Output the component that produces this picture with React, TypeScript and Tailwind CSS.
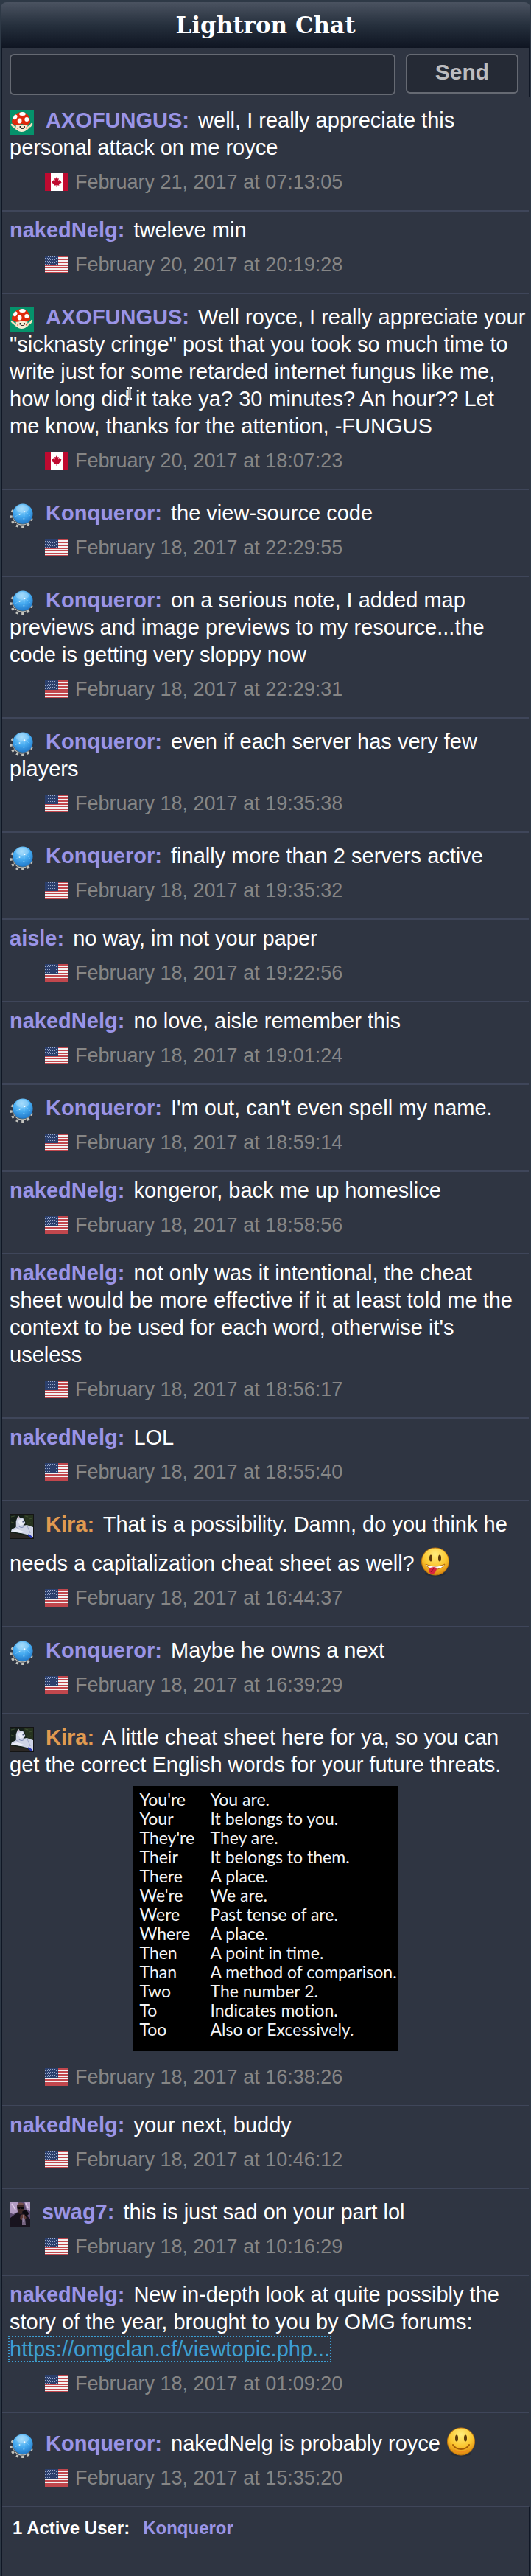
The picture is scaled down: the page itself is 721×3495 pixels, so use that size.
import React from 'react';

type Country = 'us' | 'ca';
type AvatarName = 'mushroom' | 'konqueror' | 'cat' | 'swag';

interface ChatMessage {
    name: string;
    date: string;
    body: React.ReactNode;
    avatar?: AvatarName;
    country?: Country;
    staff?: boolean;
    attachment?: React.ReactNode;
}

const UsFlag = () => (
    <svg viewBox="0 0 32 24" className="h-6 w-8 shrink-0" role="img" aria-label="United States">
        <rect width="32" height="24" fill="#f4f2f2" />
        {[0, 4, 8, 12, 15, 19, 22].map((y) => (
            <rect key={y} y={y} width="32" height="2" fill="#c1474d" />
        ))}
        <rect width="18" height="13" fill="#2b3f6c" />
        {[1, 3, 5, 7, 9, 11].map((y, row) =>
            [1, 4, 7, 10, 13, 16].map((x) => (
                <rect key={`${x}-${y}`} x={x + (row % 2 ? -1 : 0)} y={y} width="1" height="1" fill="#9aa9c9" />
            ))
        )}
    </svg>
);

const CaFlag = () => (
    <svg viewBox="0 0 32 24" className="h-6 w-8 shrink-0" role="img" aria-label="Canada">
        <rect width="32" height="24" fill="#fff" />
        <rect width="8" height="24" fill="#bf0a30" />
        <rect x="24" width="8" height="24" fill="#bf0a30" />
        <path
            d="M16 5l1.400 2.600 1.400-.6-.6 3.600 1.800-1.600.5 1.100 1.900-.2-.6 1.900.9.7-3.600 2.800.4 1.400-3.300-.5V19h-.6v-2.800l-3.300.5.4-1.400-3.600-2.800.9-.7-.6-1.900 1.900.2.5-1.100 1.800 1.600-.6-3.600 1.400.6z"
            fill="#bf0a30"
        />
    </svg>
);

const MushroomAvatar = () => (
    <svg viewBox="0 0 34 34" preserveAspectRatio="none" className="h-full w-full">
        <rect width="34" height="34" fill="#05926b" />
        <path d="M5 22l-2-2M29 22l2-3M5 22l5 4M28 22l-4 4" stroke="#f4dfc0" strokeWidth="2.500" strokeLinecap="round" />
        <path d="M9 20c-1 6 2 10 8 10s9-4 8-10z" fill="#f7ead2" />
        <path d="M3 17C4 8 10 3 17 3c7 0 12 6 12 14-3 5-7 3-12 2-5 2-11 3-14-2z" fill="#e02a0c" />
        <ellipse cx="18" cy="5.500" rx="4.500" ry="2.500" fill="#fff" />
        <ellipse cx="8" cy="10" rx="2.500" ry="3.500" transform="rotate(30 8 10)" fill="#fff" />
        <ellipse cx="14" cy="15" rx="3" ry="3.500" fill="#fff" />
        <ellipse cx="24" cy="13" rx="3" ry="3" fill="#fff" />
        <rect x="14" y="22" width="1.500" height="2.500" fill="#222" />
        <rect x="20" y="22" width="1.500" height="2.500" fill="#222" />
        <path d="M15.500 25.500h4" stroke="#333" />
        <circle cx="11.500" cy="25" r="1" fill="#e6502e" />
        <circle cx="23.500" cy="24.500" r="1" fill="#e6502e" />
    </svg>
);

const KonquerorAvatar = () => (
    <svg viewBox="0 0 34 34" className="h-full w-full">
        <defs>
            <radialGradient id="globe" cx="0.45" cy="0.25" r="0.8">
                <stop offset="0" stopColor="#9ad8fb" />
                <stop offset="0.5" stopColor="#45aaf0" />
                <stop offset="1" stopColor="#1c72c4" />
            </radialGradient>
        </defs>
        <path
            d="M5 10a14.500 14.500 0 1 0 26 7"
            fill="none"
            stroke="#c4c4be"
            strokeWidth="3.500"
            strokeDasharray="3.400 4.600"
        />
        <circle cx="17.500" cy="18" r="13" fill="#c9c9c4" />
        <circle cx="18" cy="16.500" r="13.500" fill="#55605f" />
        <circle cx="18.500" cy="15" r="14" fill="url(#globe)" />
        <ellipse cx="18" cy="8" rx="9" ry="5.500" fill="#b4e1fc" opacity="0.4" />
        <path d="M8 19c5-3 9-6 13-7 3 1 5 3 8 6M21 12l-1 10" stroke="#9fdcff" strokeWidth="0.600" fill="none" opacity="0.7" />
        <circle cx="21" cy="12" r="0.900" fill="#fff" />
        <circle cx="14" cy="16" r="0.900" fill="#e4f6ff" />
        <circle cx="20" cy="22" r="0.900" fill="#bfeaff" />
    </svg>
);

const CatAvatar = () => (
    <svg viewBox="0 0 34 34" preserveAspectRatio="none" className="h-full w-full">
        <rect width="34" height="34" fill="#15201a" />
        <path d="M19 0h14v16H24z" fill="#26331f" />
        <path d="M2 4l5-1M22 3l4 1M27 7l5-1M2 11l4 1M25 13l5-1" stroke="#415033" />
        <path d="M0 25l12 2 21 5v2H0z" fill="#2b2724" />
        <path d="M9 10l3-8 3 4 4 0 3 6-3 4 5-1 9 3v14l-9-4-8-2-14-2 1-3 6-3z" fill="#cfd4e6" />
        <path d="M11 7l1-4 2 3z" fill="#c39aa9" />
        <path d="M11 9l7-2 4 6-7 3z" fill="#e9ecf6" />
        <path d="M2 23l9-2 9 3-4 2z" fill="#eceef8" />
        <path d="M13 17c3 2 6 2 8-1" stroke="#7180ad" fill="none" />
        <path d="M9 18l4 2M25 17l4 9" stroke="#9ba5c8" />
        <rect x="18" y="10" width="2" height="1.500" fill="#4a5578" />
        <path d="M26 28l4 3 1 3" stroke="#2433b3" strokeWidth="2.500" fill="none" />
        <rect x="0.500" y="0.500" width="33" height="33" fill="none" stroke="#141414" />
    </svg>
);

const SwagAvatar = () => (
    <svg viewBox="0 0 28 34" className="h-full w-full">
        <rect width="28" height="34" fill="#5c4b70" />
        <path d="M0 0h11v14l-6 3-5-2zM20 0h8v13l-5-2z" fill="#b29bc3" />
        <path d="M3 3l5 8M22 2l3 7" stroke="#e2cfec" strokeWidth="1.500" />
        <path d="M0 34l1-12 8-6 5-2 8 3 6 7v10z" fill="#18131e" />
        <path d="M10 6c0-5 9-5 10 0l-1 8c-2 4-6 4-8 0z" fill="#3a2626" />
        <path d="M11 3c2-2 6-2 8 0l-1 2h-6z" fill="#765250" />
        <path d="M10 7h10l-1 3h-3l-1-2-1 2h-3z" fill="#08070a" />
        <path d="M17 14c4-4 8-2 9 3l-4 4z" fill="#0c0a10" />
        <path d="M15 18l5-1 3 5-4 4-5-2z" fill="#5d3a36" />
        <path d="M17 22l4 1 1 9h-5z" fill="#776582" />
        <path d="M19 18v10" stroke="#b0a0b8" />
    </svg>
);

const avatars: Record<AvatarName, React.FC> = {
    mushroom: MushroomAvatar,
    konqueror: KonquerorAvatar,
    cat: CatAvatar,
    swag: SwagAvatar
};

const Smiley: React.FC<{ tongue?: boolean }> = ({ tongue }) => (
    <svg
        viewBox="0 0 40 40"
        className="mt-3 inline-block h-10 w-10 align-[-8px]"
        role="img"
        aria-label={tongue ? 'tongue out' : 'smile'}
    >
        <defs>
            <radialGradient id="face" cx="0.5" cy="0.25" r="0.8">
                <stop offset="0" stopColor="#ffee7d" />
                <stop offset="0.55" stopColor="#fbc62f" />
                <stop offset="1" stopColor="#d77a06" />
            </radialGradient>
        </defs>
        <ellipse cx="20" cy="36" rx="14" ry="3.500" fill="#20232c" opacity="0.5" />
        <circle cx="20" cy="19.500" r="18.500" fill="url(#face)" stroke="#c5790d" />
        <ellipse cx="14" cy="15" rx="2" ry="4.500" fill="#5d3a0a" />
        <ellipse cx="26" cy="15" rx="2" ry="4.500" fill="#5d3a0a" />
        {tongue ? (
            <>
                <path d="M7 23c8 4 18 4 26 0-2 4-6 7-12 7S9 28 7 23z" fill="#fff" stroke="#b56a0c" />
                <path d="M13 28l5-1 4 1c0 3-2 8-6 9-4-1-6-5-3-9z" fill="#d9253f" />
                <path d="M14 34l4-5" stroke="#96142a" />
            </>
        ) : (
            <>
                <path d="M9 24c5 8 17 8 22 0" stroke="#a35b06" strokeWidth="2" fill="none" strokeLinecap="round" />
                <path d="M11 31c5 4 13 4 18 0" stroke="#f08a1c" strokeWidth="1.500" fill="none" />
            </>
        )}
    </svg>
);

// Text cursor floating over a word
const Caret = () => (
    <span className="relative">
        <svg viewBox="0 0 8 18" className="absolute -left-1 top-0 h-[18px] w-2" aria-hidden="true">
            <path d="M1 1.500h2.500M4.500 1.500H7M4 2v14M1 16.500h2.500M4.500 16.500H7" stroke="#fff" strokeWidth="3" />
            <path d="M1 1.500h2.500M4.500 1.500H7M4 2v14M1 16.500h2.500M4.500 16.500H7" stroke="#222" strokeWidth="1" />
        </svg>
    </span>
);

const cheatSheet = [
    ["You're", 'You are.'],
    ['Your', 'It belongs to you.'],
    ["They're", 'They are.'],
    ['Their', 'It belongs to them.'],
    ['There', 'A place.'],
    ["We're", 'We are.'],
    ['Were', 'Past tense of are.'],
    ['Where', 'A place.'],
    ['Then', 'A point in time.'],
    ['Than', 'A method of comparison.'],
    ['Two', 'The number 2.'],
    ['To', 'Indicates motion.'],
    ['Too', 'Also or Excessively.']
];

const CheatSheet = () => (
    <div className="mx-auto mt-[10px] mb-[23px] h-[360px] w-[360px] bg-black pt-[5px] pl-[9px]">
        <table className="font-['Lato',sans-serif] text-[23px] leading-[26px] text-gray-100">
            <tbody>
                {cheatSheet.map(([word, meaning]) => (
                    <tr key={word}>
                        <td className="w-24 p-0">{word}</td>
                        <td className="p-0 whitespace-nowrap">{meaning}</td>
                    </tr>
                ))}
            </tbody>
        </table>
    </div>
);

const messages: ChatMessage[] = [
    {
        name: 'AXOFUNGUS',
        avatar: 'mushroom',
        country: 'ca',
        date: 'February 21, 2017 at 07:13:05',
        body: 'well, I really appreciate this personal attack on me royce'
    },
    { name: 'nakedNelg', date: 'February 20, 2017 at 20:19:28', body: 'tweleve min' },
    {
        name: 'AXOFUNGUS',
        avatar: 'mushroom',
        country: 'ca',
        date: 'February 20, 2017 at 18:07:23',
        body: (
            <>
                Well royce, I really appreciate your "sicknasty cringe" post that you took so much time to write just
                for some retarded internet fungus like me, how long did
                <Caret /> it take ya? 30 minutes? An hour?? Let me know, thanks for the attention, -FUNGUS
            </>
        )
    },
    { name: 'Konqueror', avatar: 'konqueror', date: 'February 18, 2017 at 22:29:55', body: 'the view-source code' },
    {
        name: 'Konqueror',
        avatar: 'konqueror',
        date: 'February 18, 2017 at 22:29:31',
        body: 'on a serious note, I added map previews and image previews to my resource...the code is getting very sloppy now'
    },
    {
        name: 'Konqueror',
        avatar: 'konqueror',
        date: 'February 18, 2017 at 19:35:38',
        body: 'even if each server has very few players'
    },
    {
        name: 'Konqueror',
        avatar: 'konqueror',
        date: 'February 18, 2017 at 19:35:32',
        body: 'finally more than 2 servers active'
    },
    { name: 'aisle', date: 'February 18, 2017 at 19:22:56', body: 'no way, im not your paper' },
    { name: 'nakedNelg', date: 'February 18, 2017 at 19:01:24', body: 'no love, aisle remember this' },
    {
        name: 'Konqueror',
        avatar: 'konqueror',
        date: 'February 18, 2017 at 18:59:14',
        body: "I'm out, can't even spell my name."
    },
    { name: 'nakedNelg', date: 'February 18, 2017 at 18:58:56', body: 'kongeror, back me up homeslice' },
    {
        name: 'nakedNelg',
        date: 'February 18, 2017 at 18:56:17',
        body: "not only was it intentional, the cheat sheet would be more effective if it at least told me the context to be used for each word, otherwise it's useless"
    },
    { name: 'nakedNelg', date: 'February 18, 2017 at 18:55:40', body: 'LOL' },
    {
        name: 'Kira',
        avatar: 'cat',
        staff: true,
        date: 'February 18, 2017 at 16:44:37',
        body: (
            <>
                That is a possibility. Damn, do you think he needs a capitalization cheat sheet as well? <Smiley tongue />
            </>
        )
    },
    { name: 'Konqueror', avatar: 'konqueror', date: 'February 18, 2017 at 16:39:29', body: 'Maybe he owns a next' },
    {
        name: 'Kira',
        avatar: 'cat',
        staff: true,
        date: 'February 18, 2017 at 16:38:26',
        body: 'A little cheat sheet here for ya, so you can get the correct English words for your future threats.',
        attachment: <CheatSheet />
    },
    { name: 'nakedNelg', date: 'February 18, 2017 at 10:46:12', body: 'your next, buddy' },
    { name: 'swag7', avatar: 'swag', date: 'February 18, 2017 at 10:16:29', body: 'this is just sad on your part lol' },
    {
        name: 'nakedNelg',
        date: 'February 18, 2017 at 01:09:20',
        body: (
            <>
                New in-depth look at quite possibly the story of the year, brought to you by OMG forums:{' '}
                <a href="#topic" className="text-[#3d9fd3] outline-2 outline-dotted outline-[#3d9fd3]">
                    https://omgclan.cf/viewtopic.php...
                </a>
            </>
        )
    },
    {
        name: 'Konqueror',
        avatar: 'konqueror',
        date: 'February 13, 2017 at 15:35:20',
        body: (
            <>
                nakedNelg is probably royce <Smiley />
            </>
        )
    }
];

const Message: React.FC<{ message: ChatMessage }> = ({ message }) => {
    const { name, date, body, avatar, country = 'us', staff, attachment } = message;
    const Avatar = avatar ? avatars[avatar] : null;

    return (
        <li className="border-b-2 border-[#3f465a] px-[10px] pt-[7px] pb-[26px]">
            <p className="-mr-[10px] text-[29px] leading-[37px] text-white">
                {Avatar && (
                    <>
                        <span
                            className={`mt-[10px] mr-2 mb-[-3px] inline-block h-[34px] align-[-7px] ${avatar === 'swag' ? 'w-7' : 'w-[33px]'}`}
                        >
                            <Avatar />
                        </span>{' '}
                    </>
                )}
                <b className={`mr-1 ${staff ? 'text-[#e09a50]' : 'text-[#9a94e6]'}`}>{`${name}:`}</b> {body}
            </p>
            {attachment}
            <div className="mt-4 ml-12 flex items-center gap-[9px] text-[27px] leading-6 text-[#868686]">
                {country === 'ca' ? <CaFlag /> : <UsFlag />}
                <time>{date}</time>
            </div>
        </li>
    );
};

export default function App() {
    return (
        <div className="flex min-h-screen flex-col bg-[#2e3946] px-px pt-[3px] font-['Liberation_Sans',Arial,sans-serif]">
            <header className="rounded-t-lg bg-linear-to-b from-[#4b5361] via-[#26303d] to-[#0f1522] pt-3 pb-3 text-center">
                <h1 className="font-['DejaVu_Serif',serif] text-[31px] leading-[38px] font-bold text-white">Lightron Chat</h1>
            </header>

            <main className="flex flex-1 flex-col border-l-2 border-[#101725] bg-[#2f3542]">
                <form
                    className="flex items-start gap-[14px] border-r-2 border-[#101725] pt-2 pr-[14px] pb-[3px] pl-[10px]"
                    onSubmit={(e) => e.preventDefault()}
                >
                    <input
                        type="text"
                        aria-label="Message"
                        className="h-14 min-w-0 flex-1 rounded-md border-2 border-[#666a73] bg-[#252a35] px-2 text-[29px] text-white"
                    />
                    <button
                        type="submit"
                        className="h-[54px] w-[153px] rounded-md border-2 border-[#666a73] bg-[#252a35] pb-1 text-[30px] leading-[34px] font-bold text-[#bcbcbf]"
                    >
                        Send
                    </button>
                </form>

                <ul className="pr-[2px]">
                    {messages.map((message) => (
                        <Message key={message.date} message={message} />
                    ))}
                </ul>

                <footer className="flex flex-1 gap-[18px] border-r-2 border-[#101725] px-[14px] pt-[14px] text-2xl leading-7 font-bold text-white">
                    <span>1 Active User:</span>
                    <span className="text-[#9a94e6]">Konqueror</span>
                </footer>
            </main>
        </div>
    );
}
